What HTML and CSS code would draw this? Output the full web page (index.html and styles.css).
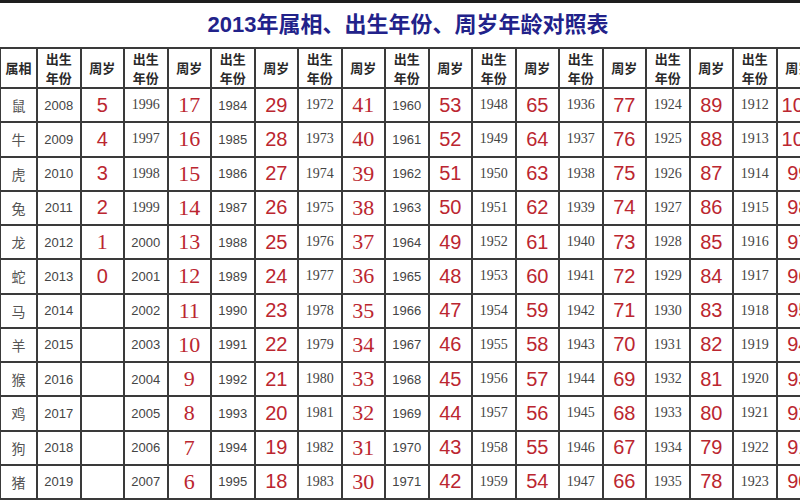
FILE: index.html
```html
<!DOCTYPE html>
<html lang="zh-CN">
<head>
<meta charset="utf-8">
<title>2013年属相、出生年份、周岁年龄对照表</title>
<link rel="stylesheet" href="styles.css">
</head>
<body>
<div class="topbar"></div>
<h1 class="title">2013年属相、出生年份、周岁年龄对照表</h1>
<table class="chart">
<colgroup>
<col class="col-z"><col class="col-n"><col class="col-n"><col class="col-n"><col class="col-n"><col class="col-n"><col class="col-n"><col class="col-n"><col class="col-n"><col class="col-n"><col class="col-n"><col class="col-n"><col class="col-n"><col class="col-n"><col class="col-n"><col class="col-n"><col class="col-n"><col class="col-n"><col class="col-n">
</colgroup>
<thead>
<tr class="head">
<th>属相</th>
<th class="two">出生<br>年份</th><th>周岁</th>
<th class="two">出生<br>年份</th><th>周岁</th>
<th class="two">出生<br>年份</th><th>周岁</th>
<th class="two">出生<br>年份</th><th>周岁</th>
<th class="two">出生<br>年份</th><th>周岁</th>
<th class="two">出生<br>年份</th><th>周岁</th>
<th class="two">出生<br>年份</th><th>周岁</th>
<th class="two">出生<br>年份</th><th>周岁</th>
<th class="two">出生<br>年份</th><th>周岁</th>
</tr>
</thead>
<tbody>
<tr><td class="z">鼠</td><td class="y s">2008</td><td class="a s">5</td><td class="y r">1996</td><td class="a r">17</td><td class="y s">1984</td><td class="a s">29</td><td class="y r">1972</td><td class="a r">41</td><td class="y s">1960</td><td class="a s">53</td><td class="y r">1948</td><td class="a s">65</td><td class="y r">1936</td><td class="a s">77</td><td class="y r">1924</td><td class="a s">89</td><td class="y r">1912</td><td class="a s">101</td></tr>
<tr><td class="z">牛</td><td class="y s">2009</td><td class="a s">4</td><td class="y r">1997</td><td class="a r">16</td><td class="y s">1985</td><td class="a s">28</td><td class="y r">1973</td><td class="a r">40</td><td class="y s">1961</td><td class="a s">52</td><td class="y r">1949</td><td class="a s">64</td><td class="y r">1937</td><td class="a s">76</td><td class="y r">1925</td><td class="a s">88</td><td class="y r">1913</td><td class="a s">100</td></tr>
<tr><td class="z">虎</td><td class="y s">2010</td><td class="a s">3</td><td class="y r">1998</td><td class="a r">15</td><td class="y s">1986</td><td class="a s">27</td><td class="y r">1974</td><td class="a r">39</td><td class="y s">1962</td><td class="a s">51</td><td class="y r">1950</td><td class="a s">63</td><td class="y r">1938</td><td class="a s">75</td><td class="y r">1926</td><td class="a s">87</td><td class="y r">1914</td><td class="a s">99</td></tr>
<tr><td class="z">兔</td><td class="y s">2011</td><td class="a s">2</td><td class="y r">1999</td><td class="a r">14</td><td class="y s">1987</td><td class="a s">26</td><td class="y r">1975</td><td class="a r">38</td><td class="y s">1963</td><td class="a s">50</td><td class="y r">1951</td><td class="a s">62</td><td class="y r">1939</td><td class="a s">74</td><td class="y r">1927</td><td class="a s">86</td><td class="y r">1915</td><td class="a s">98</td></tr>
<tr><td class="z">龙</td><td class="y s">2012</td><td class="a r">1</td><td class="y s">2000</td><td class="a r">13</td><td class="y s">1988</td><td class="a s">25</td><td class="y r">1976</td><td class="a r">37</td><td class="y s">1964</td><td class="a s">49</td><td class="y r">1952</td><td class="a s">61</td><td class="y r">1940</td><td class="a s">73</td><td class="y r">1928</td><td class="a s">85</td><td class="y r">1916</td><td class="a s">97</td></tr>
<tr><td class="z">蛇</td><td class="y s">2013</td><td class="a s">0</td><td class="y s">2001</td><td class="a r">12</td><td class="y s">1989</td><td class="a s">24</td><td class="y r">1977</td><td class="a r">36</td><td class="y s">1965</td><td class="a s">48</td><td class="y r">1953</td><td class="a s">60</td><td class="y r">1941</td><td class="a s">72</td><td class="y r">1929</td><td class="a s">84</td><td class="y r">1917</td><td class="a s">96</td></tr>
<tr><td class="z">马</td><td class="y s">2014</td><td class="a"></td><td class="y s">2002</td><td class="a r">11</td><td class="y s">1990</td><td class="a s">23</td><td class="y r">1978</td><td class="a r">35</td><td class="y s">1966</td><td class="a s">47</td><td class="y r">1954</td><td class="a s">59</td><td class="y r">1942</td><td class="a s">71</td><td class="y r">1930</td><td class="a s">83</td><td class="y r">1918</td><td class="a s">95</td></tr>
<tr><td class="z">羊</td><td class="y s">2015</td><td class="a"></td><td class="y s">2003</td><td class="a r">10</td><td class="y s">1991</td><td class="a s">22</td><td class="y r">1979</td><td class="a r">34</td><td class="y s">1967</td><td class="a s">46</td><td class="y r">1955</td><td class="a s">58</td><td class="y r">1943</td><td class="a s">70</td><td class="y r">1931</td><td class="a s">82</td><td class="y r">1919</td><td class="a s">94</td></tr>
<tr><td class="z">猴</td><td class="y s">2016</td><td class="a"></td><td class="y s">2004</td><td class="a r">9</td><td class="y s">1992</td><td class="a s">21</td><td class="y r">1980</td><td class="a r">33</td><td class="y s">1968</td><td class="a s">45</td><td class="y r">1956</td><td class="a s">57</td><td class="y r">1944</td><td class="a s">69</td><td class="y r">1932</td><td class="a s">81</td><td class="y r">1920</td><td class="a s">93</td></tr>
<tr><td class="z">鸡</td><td class="y s">2017</td><td class="a"></td><td class="y s">2005</td><td class="a r">8</td><td class="y s">1993</td><td class="a s">20</td><td class="y r">1981</td><td class="a r">32</td><td class="y s">1969</td><td class="a s">44</td><td class="y r">1957</td><td class="a s">56</td><td class="y r">1945</td><td class="a s">68</td><td class="y r">1933</td><td class="a s">80</td><td class="y r">1921</td><td class="a s">92</td></tr>
<tr><td class="z">狗</td><td class="y s">2018</td><td class="a"></td><td class="y s">2006</td><td class="a r">7</td><td class="y s">1994</td><td class="a s">19</td><td class="y r">1982</td><td class="a r">31</td><td class="y s">1970</td><td class="a s">43</td><td class="y r">1958</td><td class="a s">55</td><td class="y r">1946</td><td class="a s">67</td><td class="y r">1934</td><td class="a s">79</td><td class="y r">1922</td><td class="a s">91</td></tr>
<tr><td class="z">猪</td><td class="y s">2019</td><td class="a"></td><td class="y s">2007</td><td class="a r">6</td><td class="y s">1995</td><td class="a s">18</td><td class="y r">1983</td><td class="a r">30</td><td class="y s">1971</td><td class="a s">42</td><td class="y r">1959</td><td class="a s">54</td><td class="y r">1947</td><td class="a s">66</td><td class="y r">1935</td><td class="a s">78</td><td class="y r">1923</td><td class="a s">90</td></tr>
</tbody>
</table>
</body>
</html>
```
FILE: styles.css
```css
html, body {
  margin: 0;
  padding: 0;
  background: #ffffff;
  overflow: hidden;
  width: 800px;
  height: 500px;
}
body {
  font-family: "Liberation Sans", "Noto Sans CJK SC", sans-serif;
  color: #333;
}
.topbar {
  height: 3px;
  background: #1e1e1e;
}
.title {
  margin: 0;
  height: 44px;
  line-height: 44px;
  padding-left: 16px;
  text-align: center;
  font-family: "Liberation Sans", "Noto Sans CJK SC", sans-serif;
  font-size: 22px;
  font-weight: bold;
  color: #22228a;
}
.chart {
  border-collapse: collapse;
  table-layout: fixed;
  width: 820px;
  margin-left: -1px;
}
.col-z { width: 37px; }
.col-n { width: 43.5px; }
.chart th, .chart td {
  border: 2px solid #3a3a3a;
  padding: 0;
  text-align: center;
  vertical-align: middle;
  overflow: hidden;
  white-space: nowrap;
}
.chart tr.head { height: 39px; }
.chart tbody tr { height: 34.25px; }
.chart th {
  font-family: "Noto Sans CJK SC", sans-serif;
  font-weight: bold;
  font-size: 13px;
  color: #2a2a2a;
  line-height: 18px;
}
.chart th.two {
  font-size: 13px;
  line-height: 19px;
}
.z {
  font-family: "Noto Sans CJK SC", sans-serif;
  font-size: 14px;
  color: #555;
}
.y {
  font-size: 13px;
  color: #444;
}
.y.s { font-family: "Liberation Sans", sans-serif; }
.y.r { font-family: "Liberation Serif", serif; font-size: 14px; }
.a {
  font-size: 20px;
  color: #bb2630;
}
.a.s { font-family: "Liberation Sans", sans-serif; }
.a.r { font-family: "Liberation Serif", serif; font-size: 22px; }
```
